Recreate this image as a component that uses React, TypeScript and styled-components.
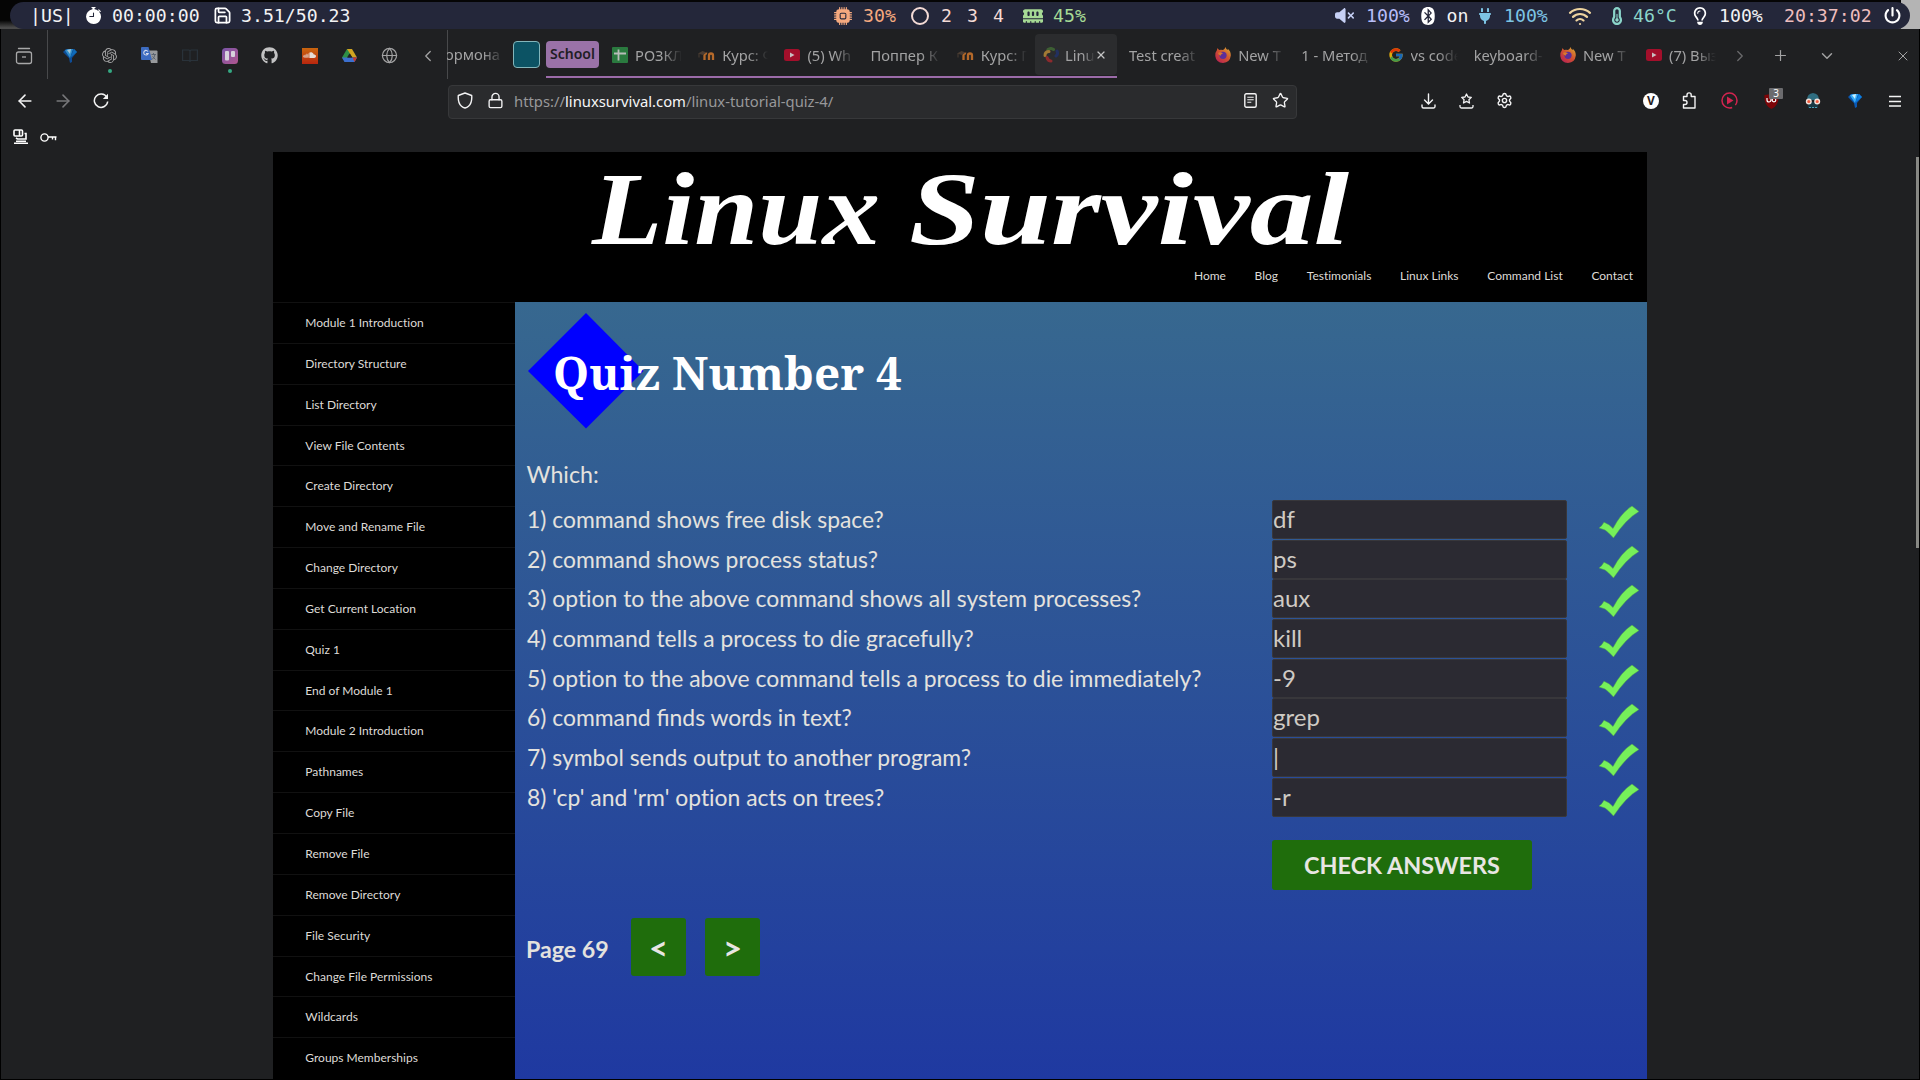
import React from "react";
import styled, { createGlobalStyle } from "styled-components";
import { BsStopwatchFill, BsCpuFill } from "react-icons/bs";
import {
  FaMemory,
  FaVolumeXmark,
  FaBluetooth,
  FaPlug,
  FaTemperatureHalf,
  FaRegLightbulb,
  FaPowerOff,
  FaGithub,
  FaSoundcloud,
} from "react-icons/fa6";
import { SiOpenai } from "react-icons/si";
import { FcGoogle } from "react-icons/fc";
import {
  ArrowLeft,
  ArrowRight,
  ChevronDown,
  ChevronLeft,
  ChevronRight,
  Globe,
  Lock,
  Plus,
  Save,
  Settings,
  Star,
  Wifi,
  X,
} from "lucide-react";

const Global = createGlobalStyle`
  *, *::before, *::after { box-sizing: border-box; }
  body { margin: 0; background: #000; overflow: hidden; }
  svg { display: block; flex: none; }
`;

const UI = `"Noto Sans", "Open Sans", sans-serif`;
const PAGE = `Lato, "Open Sans", sans-serif`;

const Desktop = styled.div`
  width: 1920px;
  height: 1080px;
  display: flex;
  flex-direction: column;
  background: #000;
  overflow: hidden;
`;

/* ---------- status bar ---------- */

const BarArea = styled.div`
  height: 29px;
  flex: none;
  padding: 2px 10px 0;
  background: linear-gradient(90deg, transparent 99%, #b4b4b4 99%),
    linear-gradient(180deg, #050505 0 70%, #4a4a4a 95%);
`;

const Bar = styled.div`
  height: 27px;
  border-radius: 14px;
  background: #24273a;
  display: flex;
  align-items: center;
  font: 18.2px/27px "DejaVu Sans Mono", monospace;
  white-space: pre;
`;

const BarText = styled.span<{ $w: number; $ml: number; $c?: string }>`
  width: ${(p) => p.$w}px;
  margin-left: ${(p) => p.$ml}px;
  color: ${(p) => p.$c ?? "#f2f2f4"};
  flex: none;
`;

const BarIcon = styled.span<{ $w: number; $ml: number; $c?: string }>`
  width: ${(p) => p.$w}px;
  margin-left: ${(p) => p.$ml}px;
  color: ${(p) => p.$c ?? "#ffffff"};
  flex: none;
  display: flex;
  justify-content: center;
`;

const Ring = styled.span`
  width: 18px;
  height: 18px;
  margin-left: 15px;
  border: 2px solid #f4dbd6;
  border-radius: 50%;
`;

/* ---------- browser chrome ---------- */

const Window = styled.div`
  flex: 1;
  min-height: 0;
  margin: 0 1px 1px;
  background: #1f2022;
  display: flex;
  flex-direction: column;
  font-family: ${UI};
`;

const TabStrip = styled.div`
  height: 50px;
  flex: none;
  display: flex;
  align-items: stretch;
  color: #a3a3a4;
  font-size: 14.7px;
`;

const Slot = styled.div<{ $w: number; $ml?: number; $c?: string }>`
  width: ${(p) => p.$w}px;
  margin-left: ${(p) => p.$ml ?? 0}px;
  color: ${(p) => p.$c ?? "inherit"};
  flex: none;
  display: flex;
  align-items: center;
  justify-content: center;
  position: relative;
`;

const TabSlot = styled(Slot)`
  padding-top: 3px;
`;

const Dot = styled.i`
  position: absolute;
  left: 18px;
  bottom: 6px;
  width: 4px;
  height: 4px;
  border-radius: 50%;
  background: #35a882;
`;

const Rule = styled.div`
  width: 1px;
  background: #48494b;
  margin-top: 1px;
`;

const TabScroller = styled.div`
  display: flex;
  width: 1278px;
  flex: none;
`;

const ClippedTab = styled.div`
  width: 53px;
  height: 50px;
  overflow: hidden;
  line-height: 51px;
  white-space: nowrap;
  display: flex;
  mask-image: linear-gradient(90deg, #000 36px, transparent 57px);
  span {
    margin-left: -2px;
  }
`;

const GroupChip = styled.div`
  width: 27px;
  height: 27px;
  margin: 12px 6px 0 13px;
  border: 1px solid #83b6bb;
  border-radius: 4px;
  background: #0c5364;
`;

const Group = styled.div`
  display: flex;
  height: 49px;
  margin-right: 4px;
  border-bottom: 2px solid #9b6ba9;
`;

const GroupLabel = styled.div`
  width: 53px;
  height: 27px;
  margin: 12px 5px 0 0;
  border-radius: 4px;
  background: #9a72a8;
  color: #211d24;
  font: 600 14px/25px ${UI};
  text-align: center;
`;

const Tab = styled.div<{ $active?: boolean }>`
  width: 86.2px;
  height: 41px;
  margin-top: 5px;
  padding: 0 8px;
  display: flex;
  align-items: center;
  gap: 7px;
  ${(p) => p.$active && "background: #2b2c2e; border-radius: 4px; width: 82px; padding-right: 10px; gap: 6px;"}
`;

const TabTitle = styled.span<{ $fade: number }>`
  flex: 1;
  min-width: 0;
  overflow: hidden;
  white-space: nowrap;
  line-height: 24px;
  mask-image: linear-gradient(90deg, #000 calc(100% - ${(p) => p.$fade}px), transparent 100%);
`;

const NavBar = styled.div`
  height: 45px;
  flex: none;
  display: flex;
  align-items: center;
  color: #f3f3f4;
  ${Slot} {
    padding-bottom: 2px;
  }
`;

const UrlBar = styled.div`
  width: 849px;
  height: 34px;
  margin-left: 328px;
  display: flex;
  align-items: center;
  border: 1px solid #37383a;
  border-radius: 4px;
  background: #2a2b2d;
  font-size: 14.8px;
`;

const UrlText = styled.span`
  flex: 1;
  margin-left: 4px;
  padding-bottom: 2px;
  white-space: nowrap;
  color: #98989a;
  b {
    font-weight: 400;
    color: #f6f6f7;
  }
`;

const VBadge = styled.span`
  width: 16px;
  height: 16px;
  border-radius: 50%;
  background: #fff;
  color: #1f2022;
  font: 700 12px/16px ${UI};
  text-align: center;
`;

const Count = styled.span`
  position: absolute;
  left: 19px;
  top: -5px;
  width: 14px;
  height: 11px;
  border-radius: 1px;
  background: #6b6b6e;
  color: #fff;
  font: 10px/11px ${UI};
  text-align: center;
`;

const Bookmarks = styled.div`
  height: 28px;
  flex: none;
  display: flex;
  align-items: center;
  padding-bottom: 2px;
  color: #fff;
`;

/* ---------- web page ---------- */

const Viewport = styled.div`
  flex: 1;
  min-height: 0;
  display: flex;
  overflow: hidden;
`;

const Site = styled.div`
  width: 1374px;
  margin-left: 272px;
  flex: none;
  font-family: ${PAGE};
  font-variant-ligatures: none;
  background: #000;
`;

const ScrollThumb = styled.div`
  width: 3px;
  height: 391px;
  margin: 5px 0 0 auto;
  background: #888985;
`;

const Header = styled.header`
  height: 150px;
  display: flex;
  flex-direction: column;
  justify-content: space-between;
`;

const TopNav = styled.nav`
  display: flex;
  justify-content: flex-end;
  gap: 28.700px;
  padding: 0 14px 17px 0;
  color: #dedbd7;
  font-size: 12px;
  line-height: 18px;
`;

const Body = styled.div`
  display: flex;
  height: 777px;
`;

const Sidebar = styled.ul`
  width: 242px;
  height: 777px;
  margin: 0;
  padding: 0;
  list-style: none;
  overflow: hidden;
`;

const SideItem = styled.li`
  height: 40.85px;
  border-top: 1px solid #111111;
  padding-left: 32.300px;
  color: #dedbd7;
  font-size: 12px;
  line-height: 40px;
`;

const Main = styled.main`
  flex: 1;
  background: linear-gradient(180deg, #37688f, #1f39a1);
  color: #e4e2de;
  font-size: 23.200px;
`;

const Which = styled.p`
  margin: 0 0 0 11.500px;
  height: 46px;
  line-height: 40px;
`;

const Question = styled.div<{ $liga?: boolean }>`
  height: 39.7px;
  display: grid;
  grid-template-columns: 745px 295px 32px 40px;
  padding-left: 12px;
  font-size: 22.900px;
  line-height: 38px;
  font-variant-ligatures: ${(p) => (p.$liga ? "normal" : "none")};
`;

const Answer = styled.div`
  height: 39px;
  border: 1px solid #38373b;
  border-radius: 2px;
  background: #2b2a32;
  color: #cfcac4;
  font-size: 24px;
  line-height: 36px;
`;

const Tick = styled.span`
  grid-column: 4;
  padding-top: 6px;
`;

const GreenButton = styled.div<{ $w: number; $h: number; $size?: number }>`
  width: ${(p) => p.$w}px;
  height: ${(p) => p.$h}px;
  border-radius: 3px;
  background: #1f6d0c;
  color: #e8e6e3;
  font-size: ${(p) => p.$size ?? 23.4}px;
  font-weight: 700;
  display: flex;
  align-items: center;
  justify-content: center;
`;

const CheckRow = styled.div`
  padding: 22px 0 0 757px;
`;

const Pager = styled.div`
  display: flex;
  align-items: center;
  gap: 19px;
  padding: 28px 0 0 11px;
`;

const PageLabel = styled.span`
  width: 86px;
  font-weight: 700;
  padding-top: 5px;
`;

/* ---------- drawings ---------- */

const ArchiveIcon = () => (
  <svg width="18" height="18" viewBox="0 0 18 18" fill="none" stroke="#a8a8a9" strokeWidth="1.3">
    <path d="M3.500 1.500h11" strokeLinecap="round" />
    <rect x="1.500" y="5" width="15" height="11.500" rx="2" />
    <path d="M7 10h4" />
  </svg>
);

const Gem = ({ bright }: { bright?: boolean }) => (
  <svg width="14" height="15" viewBox="0 0 14 15" opacity={bright ? 1 : 0.8}>
    <path d="M0 4 3 1h8l3 3-5 6v4l-2 1-1-5z" fill="#0a58b4" />
    <path d="M2 2.500 5 1h5l-3 9z" fill="#35aaf5" />
    <path d="m4 2 4-1-1 5z" fill="#c9efff" />
    <path d="m7 10 4-9 3 3z" fill="#0c7fe0" />
  </svg>
);

const Translate = () => (
  <svg width="17" height="17" viewBox="0 0 17 17">
    <path d="M7 3.500h8.500a1 1 0 0 1 1 1V16H10z" fill="#97999c" />
    <path d="M0 1a1 1 0 0 1 1-1h6.500L11 13H1a1 1 0 0 1-1-1z" fill="#3c6bc0" />
    <path d="M7 4.500A2.300 2.300 0 1 0 7.200 6.500H5" fill="none" stroke="#d5dcec" strokeWidth="1.100" />
    <path d="M10.500 7.500h4.500M12.500 6v1.500M14 7.500q-.5 3-3 5M11.500 9.500l3 3" fill="none" stroke="#5c6570" />
  </svg>
);

const BookIcon = () => (
  <svg width="16" height="13" viewBox="0 0 16 13" fill="none" stroke="#29323a" strokeWidth="1.200">
    <path d="M.6 1h6.400l1 1 1-1h6.400v10.500H9l-1 1-1-1H.6zM8 2v10" />
  </svg>
);

const Trello = () => (
  <svg width="16" height="16" viewBox="0 0 16 16">
    <defs>
      <linearGradient id="tr" x1="0" y1="0" x2="1" y2="1">
        <stop offset="0" stopColor="#7a55a8" />
        <stop offset="1" stopColor="#b0568f" />
      </linearGradient>
    </defs>
    <rect width="16" height="16" rx="3.500" fill="url(#tr)" />
    <rect x="3" y="3" width="4" height="9.500" rx="1" fill="#d8d2dc" />
    <rect x="9" y="3" width="4" height="6" rx="1" fill="#d8d2dc" />
  </svg>
);

const CloudBox = styled.span`
  width: 16px;
  height: 16px;
  display: flex;
  align-items: center;
  justify-content: center;
  color: #e6dcd6;
  background: linear-gradient(#c9660f, #b8260f);
`;

const Drive = () => (
  <svg width="15" height="13" viewBox="0 0 15 13">
    <path d="M5 0h2.500L9 3.500 3 13 0 8.500z" fill="#2e8f47" />
    <path d="M5 0h5l5 8.500h-4.500z" fill="#d1a420" />
    <path d="M0 8.500h15L12.500 13H2.500z" fill="#3c6fd0" />
    <path d="M10.500 8.500H15L12.500 13z" fill="#c4392f" />
    <path d="m7.500 4.500 2.500 4H5z" fill="#1f2022" />
  </svg>
);

const Sheets = () => (
  <svg width="16" height="16" viewBox="0 0 16 16">
    <rect width="16" height="16" rx="1" fill="#2a7a3f" />
    <path d="M6.500 2.500v11M2 6.500h12" stroke="#b8bdb9" strokeWidth="1.800" />
  </svg>
);

const Moodle = () => (
  <svg width="17" height="16" viewBox="0 0 17 16" fill="none">
    <path d="M6.500 13V8.500a1.800 1.800 0 0 1 2.500-1.800M11 13V8.500a2 2 0 0 1 4 0V13" stroke="#b5692a" strokeWidth="2.300" />
    <path d="M0 6.500 4.500 4l4 1.500L5 8z" fill="#4b3d33" />
    <path d="M1 6.500v4" stroke="#4b3d33" />
  </svg>
);

const YouTube = () => (
  <svg width="16" height="12" viewBox="0 0 16 12">
    <rect width="16" height="12" rx="2.500" fill="#a30f2b" />
    <path d="m6 3.500 4.500 2.500L6 8.500z" fill="#c9bfc1" />
  </svg>
);

const Swirl = () => (
  <svg width="16" height="16" viewBox="0 0 16 16" fill="none" strokeWidth="3" strokeLinecap="round">
    <path d="M5 2.500q3-2 5.500 0" stroke="#3d5f33" />
    <path d="M2 8.500q0-4 4-4" stroke="#a17a35" />
    <path d="M14 4q1.500 3-1 5" stroke="#22305f" />
    <path d="M4 10.500q1 3.500 4 3.500" stroke="#8c2a2d" />
  </svg>
);

const Firefox = () => (
  <svg width="16" height="16" viewBox="0 0 16 16">
    <defs>
      <linearGradient id="ff" x1="1" y1="0" x2="0.200" y2="1">
        <stop offset="0" stopColor="#d9b432" />
        <stop offset="0.500" stopColor="#d2542f" />
        <stop offset="1" stopColor="#b82252" />
      </linearGradient>
    </defs>
    <path
      d="M10.500 0q.5 2 2 3 .5-.5.300-1.300Q16 4.500 15.800 8.500 15 15.500 8 16 1 15.500.3 9 .2 5 2 3q0-1 .3-1.700Q3.500 2 4 3q2-.7 4 0 2-1 2.500-3"
      fill="url(#ff)"
    />
    <circle cx="8" cy="8.300" r="3.600" fill="#5b2f9a" />
    <path d="M3 6q2-1.500 5 .3-2 .7-2.500 2.500Q3.500 8 3 6" fill="#d8792d" />
  </svg>
);

const Reload = () => (
  <svg width="16" height="16" viewBox="0 0 16 16" fill="none" stroke="currentColor" strokeWidth="1.500">
    <path d="M13.800 4.200A6.700 6.700 0 1 0 14.700 8.500" />
    <path d="M15 .8v5.200H9.800z" fill="currentColor" stroke="none" />
  </svg>
);

const ShieldIcon = () => (
  <svg width="16" height="17" viewBox="0 0 16 17" fill="none" stroke="currentColor" strokeWidth="1.400" strokeLinejoin="round">
    <path d="M8 1 14.700 3.500q.6 7.500-3.200 10.800Q10 15.600 8 16q-2-.4-3.500-1.700Q.7 11 1.300 3.500z" />
  </svg>
);

const Reader = () => (
  <svg width="13" height="15" viewBox="0 0 13 15" fill="none" stroke="currentColor" strokeWidth="1.400">
    <rect x=".8" y=".8" width="11.400" height="13.400" rx="1.500" />
    <path d="M3.300 4.200h6.400M3.300 6.700h6.400M3.300 9.200h4" strokeWidth="1.100" />
  </svg>
);

const Download = () => (
  <svg width="15" height="16" viewBox="0 0 15 16" fill="none" stroke="currentColor" strokeWidth="1.400" strokeLinecap="round">
    <path d="M7.500 1v9.500M3.500 7l4 4 4-4M1 12v1.500A1.500 1.500 0 0 0 2.500 15h10a1.500 1.500 0 0 0 1.500-1.500V12" />
  </svg>
);

const StarTray = () => (
  <svg width="15" height="16" viewBox="0 0 15 16" fill="none" stroke="currentColor" strokeWidth="1.300" strokeLinejoin="round">
    <path d="m7.500 1 1.500 3 3.300.4L9.900 6.700l.6 3.300-3-1.600-3 1.600.6-3.300-2.400-2.300L6 4zM1 12v1.500A1.500 1.500 0 0 0 2.500 15h10a1.500 1.500 0 0 0 1.500-1.500V12" />
  </svg>
);

const PuzzleIcon = () => (
  <svg width="15" height="17" viewBox="0 0 15 17" fill="none" stroke="currentColor" strokeWidth="1.400" strokeLinejoin="round">
    <path d="M1.500 4.500H5V3a2 2 0 0 1 4.200 0v1.500H13V16H1.500v-3.500H3a1.900 1.900 0 0 0 0-4H1.500z" />
  </svg>
);

const PlayCircle = () => (
  <svg width="17" height="17" viewBox="0 0 17 17" fill="none">
    <circle cx="8.500" cy="8.500" r="7.500" stroke="#d2244f" strokeWidth="1.500" strokeDasharray="43 4" strokeDashoffset="-9" />
    <path d="m6 4.500 6.500 4-6.500 4z" fill="#d2244f" />
  </svg>
);

const UBlock = () => (
  <svg width="15" height="16" viewBox="0 0 15 16" fill="none">
    <path d="M7.500 0q3 2 7 2 .8 10.500-7 14Q-.3 12.500.5 2q4 0 7-2" fill="#7d0508" />
    <path d="M3 5v2a2 2 0 0 0 4 0V5v3" stroke="#fff" strokeWidth="1.200" />
    <circle cx="10" cy="7" r="1.800" stroke="#fff" strokeWidth="1.200" />
  </svg>
);

const Spy = () => (
  <svg width="16" height="16" viewBox="0 0 16 16">
    <path d="M2 7q0-6.500 6-7 6 .5 6 7z" fill="#2f6d80" />
    <path d="M3 9h10v6H3z" fill="#173844" />
    <path d="M4 14.500h8" stroke="#4d9fb8" strokeDasharray="2 1" />
    <circle cx="3.800" cy="8.500" r="2.300" fill="#f05a3c" stroke="#f0e2dc" strokeWidth="1.400" />
    <circle cx="12.200" cy="8.500" r="2.300" fill="#f05a3c" stroke="#f0e2dc" strokeWidth="1.400" />
  </svg>
);

const MenuIcon = () => (
  <svg width="12" height="12" viewBox="0 0 12 12" stroke="currentColor" strokeWidth="1.500">
    <path d="M0 1.500h12M0 6.500h12M0 11h12" />
  </svg>
);

const PcIcon = () => (
  <svg width="16" height="16" viewBox="0 0 16 16" fill="none" stroke="currentColor" strokeWidth="1.600">
    <rect x="1" y="1" width="8.500" height="6" rx="1" />
    <path d="M6.500 1v6M11.500 4.500H13V10H4.500L3 9" />
    <path d="M1 14.200h14M3 12.200h10" />
  </svg>
);

const KeyIcon = () => (
  <svg width="17" height="9" viewBox="0 0 17 9" fill="none" stroke="currentColor" strokeWidth="1.400">
    <circle cx="4.500" cy="4.500" r="3.600" />
    <path d="M8 4h8.500M15.500 4v3.200M12.500 4v2.500" />
  </svg>
);

const CheckMark = () => (
  <svg width="40" height="32" viewBox="0 0 40 32">
    <path
      d="M0 22Q3 20 5 16.200 10 18 14 22.500 22 7 33 0L40 5.500Q27 13 14.500 32 9 26 6 24z"
      fill="#76f05a"
      stroke="#4f9c50"
      strokeWidth=".5"
    />
  </svg>
);

/* ---------- data ---------- */

type TabInfo = { title: string; icon?: React.ReactNode; active?: boolean };

const groupTabs: TabInfo[] = [
  { title: "РОЗКЛ", icon: <Sheets /> },
  { title: "Курс: Ф", icon: <Moodle /> },
  { title: "(5) Wh", icon: <YouTube /> },
  { title: "Поппер К" },
  { title: "Курс: П", icon: <Moodle /> },
  { title: "Linu", icon: <Swirl />, active: true },
];

const looseTabs: TabInfo[] = [
  { title: "Test creat" },
  { title: "New T", icon: <Firefox /> },
  { title: "1 - Метод" },
  { title: "vs code", icon: <FcGoogle size={16} opacity={0.85} /> },
  { title: "keyboard-" },
  { title: "New T", icon: <Firefox /> },
  { title: "(7) Выз", icon: <YouTube /> },
];

const modules = [
  "Module 1 Introduction",
  "Directory Structure",
  "List Directory",
  "View File Contents",
  "Create Directory",
  "Move and Rename File",
  "Change Directory",
  "Get Current Location",
  "Quiz 1",
  "End of Module 1",
  "Module 2 Introduction",
  "Pathnames",
  "Copy File",
  "Remove File",
  "Remove Directory",
  "File Security",
  "Change File Permissions",
  "Wildcards",
  "Groups Memberships",
];

const questions: [string, string][] = [
  ["1) command shows free disk space?", "df"],
  ["2) command shows process status?", "ps"],
  ["3) option to the above command shows all system processes?", "aux"],
  ["4) command tells a process to die gracefully?", "kill"],
  ["5) option to the above command tells a process to die immediately?", "-9"],
  ["6) command finds words in text?", "grep"],
  ["7) symbol sends output to another program?", "|"],
  ["8) 'cp' and 'rm' option acts on trees?", "-r"],
];

const CloseX = styled(X)`
  margin-left: -6px;
`;

const renderTab = (t: TabInfo, i: number) => (
  <Tab key={i} $active={t.active}>
    {t.icon}
    <TabTitle $fade={t.active ? 12 : 20}>{t.title}</TabTitle>
    {t.active && <CloseX size={12} color="#c4c4c5" strokeWidth={2.4} />}
  </Tab>
);

const StatusBar = () => (
  <BarArea>
    <Bar>
      <BarText $ml={20} $w={43}>|US|</BarText>
      <BarIcon $ml={11} $w={18}><BsStopwatchFill size={17} /></BarIcon>
      <BarText $ml={10} $w={87}>00:00:00</BarText>
      <BarIcon $ml={14} $w={18}><Save size={19} strokeWidth={2.2} /></BarIcon>
      <BarText $ml={10} $w={109}>3.51/50.23</BarText>
      <BarIcon $ml={484} $w={18} $c="#f5a97f"><BsCpuFill size={18} /></BarIcon>
      <BarText $ml={11} $w={33} $c="#f5a97f">30%</BarText>
      <Ring />
      <BarText $ml={12} $w={11} $c="#f4dbd6">2</BarText>
      <BarText $ml={15} $w={11} $c="#f4dbd6">3</BarText>
      <BarText $ml={15} $w={11} $c="#f4dbd6">4</BarText>
      <BarIcon $ml={18} $w={21} $c="#a6da95"><FaMemory size={20} /></BarIcon>
      <BarText $ml={10} $w={33} $c="#a6da95">45%</BarText>
      <BarIcon $ml={248} $w={20} $c="#c6d0f5"><FaVolumeXmark size={19} /></BarIcon>
      <BarText $ml={12} $w={44} $c="#b7bdf8">100%</BarText>
      <BarIcon $ml={9.500} $w={16}><FaBluetooth size={18} /></BarIcon>
      <BarText $ml={11} $w={22}>on</BarText>
      <BarIcon $ml={8.500} $w={16} $c="#7dc4e4"><FaPlug size={16} /></BarIcon>
      <BarText $ml={11} $w={44} $c="#7dc4e4">100%</BarText>
      <BarIcon $ml={20} $w={24} $c="#eed49f"><Wifi size={24} strokeWidth={2.2} /></BarIcon>
      <BarIcon $ml={19} $w={12} $c="#8bd5ca"><FaTemperatureHalf size={18} /></BarIcon>
      <BarText $ml={10} $w={44} $c="#8bd5ca">46°C</BarText>
      <BarIcon $ml={16} $w={14}><FaRegLightbulb size={18} /></BarIcon>
      <BarText $ml={12} $w={44}>100%</BarText>
      <BarText $ml={21} $w={87} $c="#eebebe">20:37:02</BarText>
      <BarIcon $ml={12} $w={18}><FaPowerOff size={17} /></BarIcon>
    </Bar>
  </BarArea>
);

export default function App() {
  return (
    <Desktop>
      <Global />
      <StatusBar />
      <Window>
        <TabStrip>
          <TabSlot $w={46}><ArchiveIcon /></TabSlot>
          <Rule />
          <TabSlot $w={40} $ml={2}><Gem /></TabSlot>
          <TabSlot $w={40}><SiOpenai size={15} /><Dot /></TabSlot>
          <TabSlot $w={40}><Translate /></TabSlot>
          <TabSlot $w={40}><BookIcon /></TabSlot>
          <TabSlot $w={40}><Trello /><Dot /></TabSlot>
          <TabSlot $w={40} $c="#c2c2c3"><FaGithub size={17} /></TabSlot>
          <TabSlot $w={40}><CloudBox><FaSoundcloud size={13} /></CloudBox></TabSlot>
          <TabSlot $w={40}><Drive /></TabSlot>
          <TabSlot $w={40}><Globe size={17} strokeWidth={1.7} /></TabSlot>
          <TabSlot $w={37}><ChevronLeft size={18} strokeWidth={1.7} /></TabSlot>
          <Rule />
          <TabScroller>
            <ClippedTab><span>ормонал</span></ClippedTab>
            <GroupChip />
            <Group>
              <GroupLabel>School</GroupLabel>
              {groupTabs.map(renderTab)}
            </Group>
            {looseTabs.map(renderTab)}
          </TabScroller>
          <TabSlot $w={30} $c="#6a6a6c"><ChevronRight size={18} strokeWidth={1.7} /></TabSlot>
          <TabSlot $w={46} $ml={2}><Plus size={17} strokeWidth={1.7} /></TabSlot>
          <TabSlot $w={46} $ml={1}><ChevronDown size={18} strokeWidth={1.9} /></TabSlot>
          <TabSlot $w={32} $ml={37}><X size={16} strokeWidth={1.5} /></TabSlot>
        </TabStrip>

        <NavBar>
          <Slot $w={38} $ml={5}><ArrowLeft size={20} strokeWidth={1.9} /></Slot>
          <Slot $w={38} $c="#77777a"><ArrowRight size={20} strokeWidth={1.9} /></Slot>
          <Slot $w={38}><Reload /></Slot>
          <UrlBar>
            <Slot $w={32}><ShieldIcon /></Slot>
            <Slot $w={29}><Lock size={17} strokeWidth={1.9} /></Slot>
            <UrlText>https://<b>linuxsurvival.com</b>/linux-tutorial-quiz-4/</UrlText>
            <Slot $w={30}><Reader /></Slot>
            <Slot $w={31}><Star size={17} strokeWidth={1.9} /></Slot>
          </UrlBar>
          <Slot $w={38} $ml={112}><Download /></Slot>
          <Slot $w={38}><StarTray /></Slot>
          <Slot $w={38}><Settings size={17} strokeWidth={2} /></Slot>
          <Slot $w={38} $ml={109}><VBadge>V</VBadge></Slot>
          <Slot $w={38}><PuzzleIcon /></Slot>
          <Slot $w={42}><PlayCircle /></Slot>
          <Slot $w={42}><UBlock /><Count>3</Count></Slot>
          <Slot $w={42}><Spy /></Slot>
          <Slot $w={42}><Gem bright /></Slot>
          <Slot $w={38}><MenuIcon /></Slot>
        </NavBar>

        <Bookmarks>
          <Slot $w={16} $ml={12}><PcIcon /></Slot>
          <Slot $w={17} $ml={11}><KeyIcon /></Slot>
        </Bookmarks>

        <Viewport>
          <Site>
            <Header>
              <svg width="1374" height="110" viewBox="0 0 1374 110">
                <g
                  fill="#fff"
                  fontFamily="'Liberation Serif', serif"
                  fontSize="104"
                  fontStyle="italic"
                  fontWeight="700"
                >
                  <text x="319" y="92" textLength="288" lengthAdjust="spacingAndGlyphs">Linux</text>
                  <text x="636" y="92" textLength="440" lengthAdjust="spacingAndGlyphs">Survival</text>
                </g>
              </svg>
              <TopNav>
                <span>Home</span>
                <span>Blog</span>
                <span>Testimonials</span>
                <span>Linux Links</span>
                <span>Command List</span>
                <span>Contact</span>
              </TopNav>
            </Header>
            <Body>
              <Sidebar>
                {modules.map((m) => (
                  <SideItem key={m}>{m}</SideItem>
                ))}
              </Sidebar>
              <Main>
                <svg width="600" height="152" viewBox="0 0 600 152">
                  <path d="M13 69 71 11l57.500 58L71 126.500z" fill="#0000ff" />
                  <text
                    x="38"
                    y="87.500"
                    fill="#fff"
                    fontFamily="'Noto Serif', 'DejaVu Serif Condensed', 'DejaVu Serif', serif"
                    fontSize="45"
                    fontWeight="700"
                    textLength="349"
                    lengthAdjust="spacingAndGlyphs"
                  >
                    Quiz Number 4
                  </text>
                </svg>
                <Which>Which:</Which>
                {questions.map(([q, a]) => (
                  <Question key={q} $liga={q.includes("finds")}>
                    <span>{q}</span>
                    <Answer>{a}</Answer>
                    <Tick><CheckMark /></Tick>
                  </Question>
                ))}
                <CheckRow>
                  <GreenButton $w={260} $h={50}>CHECK ANSWERS</GreenButton>
                </CheckRow>
                <Pager>
                  <PageLabel>Page 69</PageLabel>
                  <GreenButton $w={55} $h={58} $size={33}>&lt;</GreenButton>
                  <GreenButton $w={55} $h={58} $size={33}>&gt;</GreenButton>
                </Pager>
              </Main>
            </Body>
          </Site>
          <ScrollThumb />
        </Viewport>
      </Window>
    </Desktop>
  );
}
